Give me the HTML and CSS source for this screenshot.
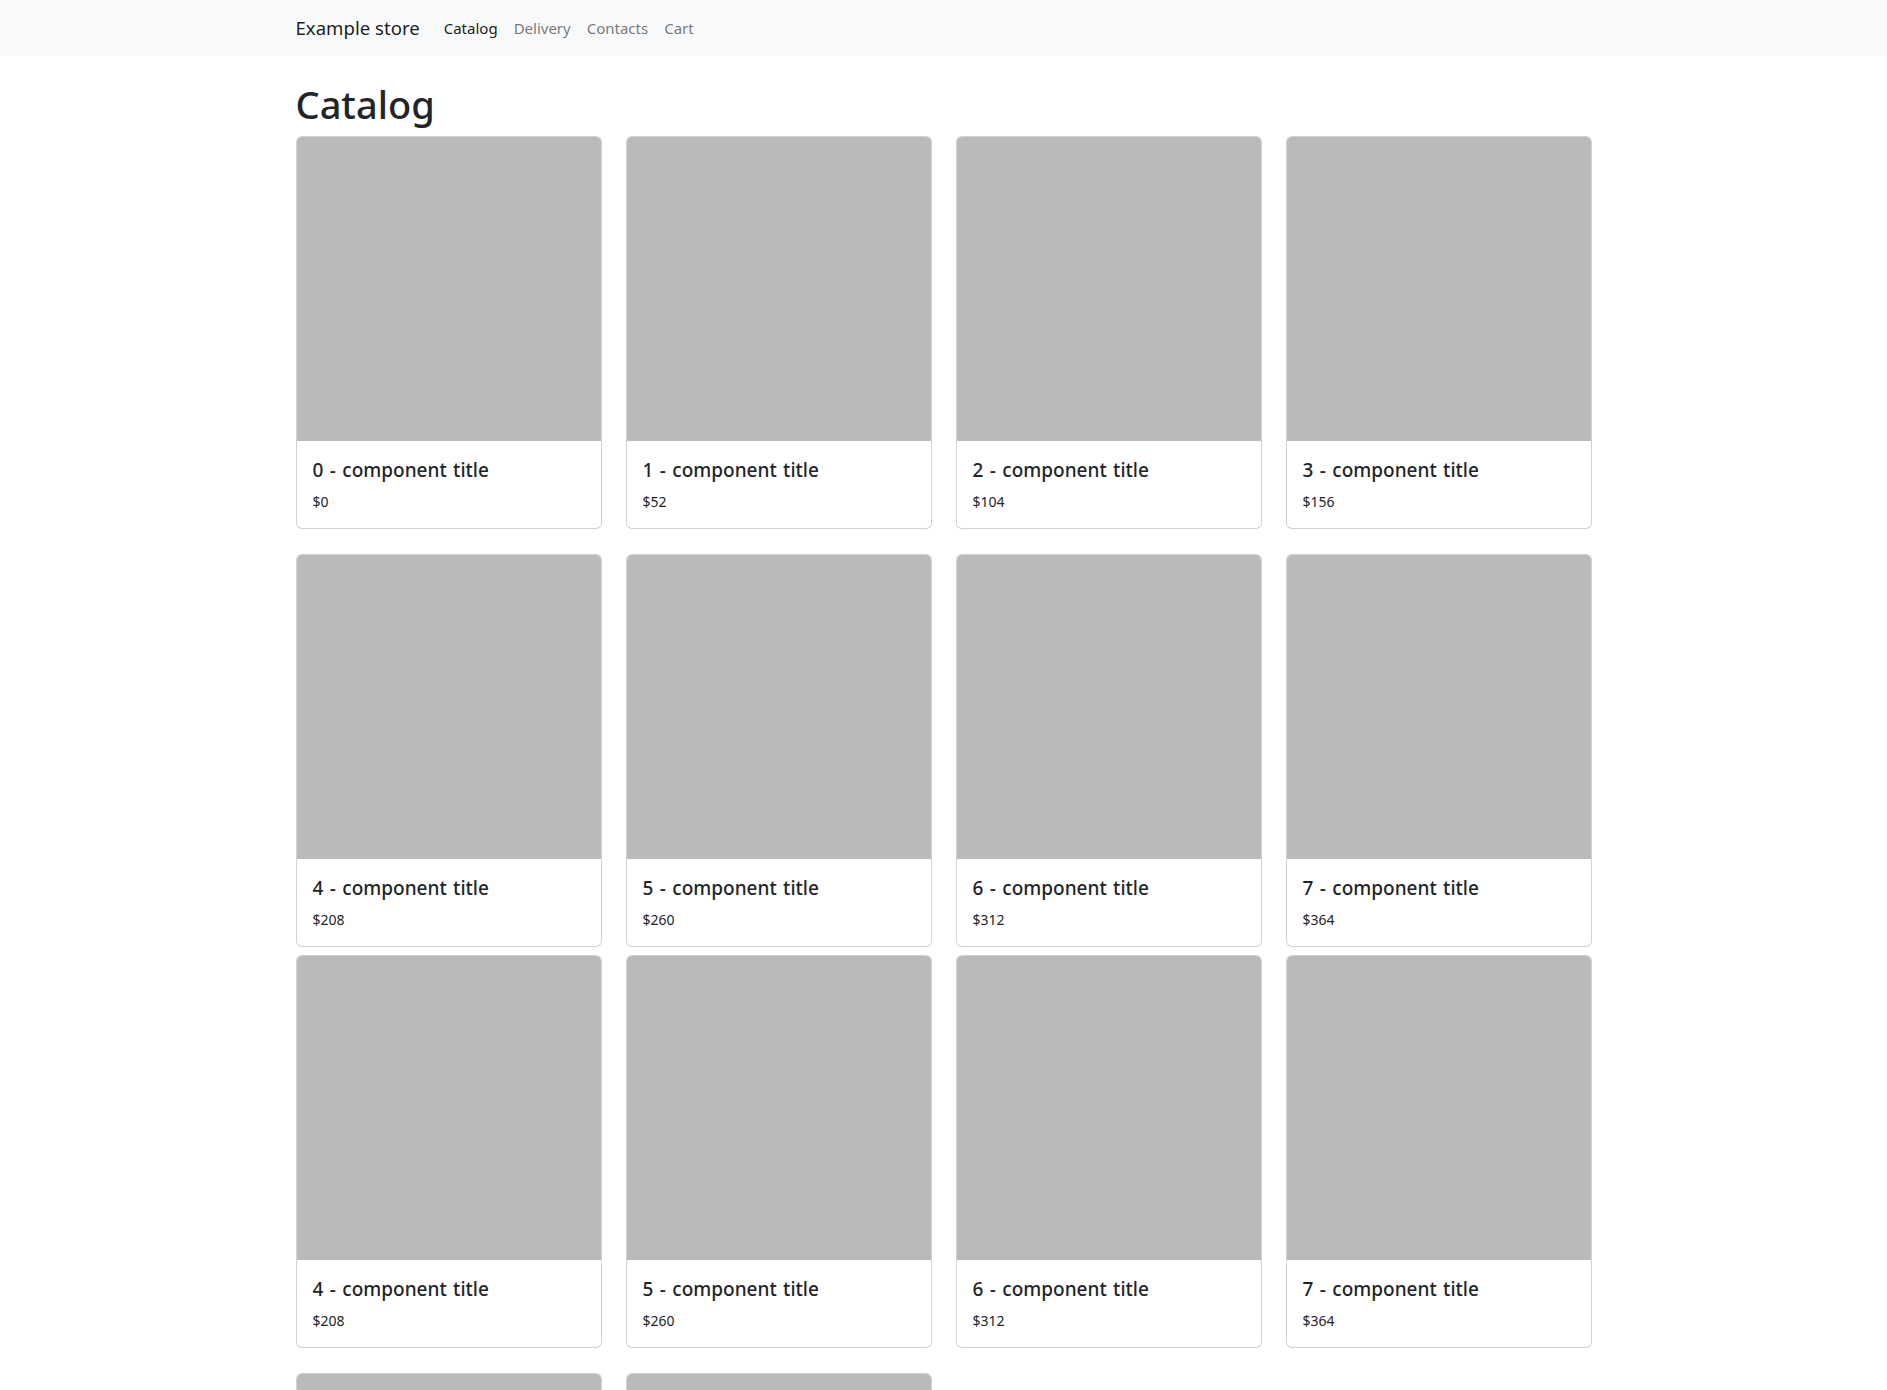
FILE: index.html
```html
<!DOCTYPE html>
<html lang="en">
<head>
<meta charset="utf-8">
<title>Example store</title>
<link rel="stylesheet" href="styles.css">
</head>
<body>
<nav class="navbar">
  <div class="container nav-inner">
    <a class="brand" href="#">Example store</a>
    <ul class="nav-links">
      <li><a class="nav-link active" href="#">Catalog</a></li>
      <li><a class="nav-link" href="#">Delivery</a></li>
      <li><a class="nav-link" href="#">Contacts</a></li>
      <li><a class="nav-link" href="#">Cart</a></li>
    </ul>
  </div>
</nav>
<main class="container main">
  <h1 class="page-title">Catalog</h1>
  <div class="grid row-a">
    <div class="card"><div class="card-img"></div><div class="card-body"><h5 class="card-title">0 - component title</h5><div class="card-price">$0</div></div></div>
    <div class="card"><div class="card-img"></div><div class="card-body"><h5 class="card-title">1 - component title</h5><div class="card-price">$52</div></div></div>
    <div class="card"><div class="card-img"></div><div class="card-body"><h5 class="card-title">2 - component title</h5><div class="card-price">$104</div></div></div>
    <div class="card"><div class="card-img"></div><div class="card-body"><h5 class="card-title">3 - component title</h5><div class="card-price">$156</div></div></div>
  </div>
  <div class="grid row-b">
    <div class="card"><div class="card-img"></div><div class="card-body"><h5 class="card-title">4 - component title</h5><div class="card-price">$208</div></div></div>
    <div class="card"><div class="card-img"></div><div class="card-body"><h5 class="card-title">5 - component title</h5><div class="card-price">$260</div></div></div>
    <div class="card"><div class="card-img"></div><div class="card-body"><h5 class="card-title">6 - component title</h5><div class="card-price">$312</div></div></div>
    <div class="card"><div class="card-img"></div><div class="card-body"><h5 class="card-title">7 - component title</h5><div class="card-price">$364</div></div></div>
  </div>
  <div class="grid row-a">
    <div class="card"><div class="card-img"></div><div class="card-body"><h5 class="card-title">4 - component title</h5><div class="card-price">$208</div></div></div>
    <div class="card"><div class="card-img"></div><div class="card-body"><h5 class="card-title">5 - component title</h5><div class="card-price">$260</div></div></div>
    <div class="card"><div class="card-img"></div><div class="card-body"><h5 class="card-title">6 - component title</h5><div class="card-price">$312</div></div></div>
    <div class="card"><div class="card-img"></div><div class="card-body"><h5 class="card-title">7 - component title</h5><div class="card-price">$364</div></div></div>
  </div>
  <div class="grid row-a">
    <div class="card"><div class="card-img"></div><div class="card-body"><h5 class="card-title">8 - component title</h5><div class="card-price">$416</div></div></div>
    <div class="card"><div class="card-img"></div><div class="card-body"><h5 class="card-title">9 - component title</h5><div class="card-price">$468</div></div></div>
  </div>
</main>
</body>
</html>
```
FILE: styles.css
```css
* { box-sizing: border-box; }
html, body { margin: 0; padding: 0; }
body {
  font-family: "Noto Sans", "Open Sans", sans-serif;
  font-size: 16px;
  line-height: 1.5;
  color: #212529;
  background: #fff;
}
.container {
  width: 1296px;
  margin: 0 auto;
}
.navbar {
  background: #f8f9fa;
  height: 56px;
}
.nav-inner {
  display: flex;
  align-items: center;
  height: 56px;
}
.brand {
  font-size: 18.6px;
  color: rgba(0,0,0,0.9);
  text-decoration: none;
  margin-right: 16px;
  line-height: 30px;
}
.nav-links {
  display: flex;
  list-style: none;
  margin: 0;
  padding: 0;
}
.nav-link {
  display: block;
  padding: 8px 8px;
  font-size: 15px;
  color: rgba(0,0,0,0.55);
  text-decoration: none;
}
.nav-link.active { color: rgba(0,0,0,0.9); }
.main { padding-top: 24px; }
.page-title {
  font-size: 38px;
  font-weight: 500;
  line-height: 48px;
  margin: 0 0 8px;
  color: #212529;
}
.grid {
  display: grid;
  grid-template-columns: repeat(4, 306px);
  column-gap: 24px;
}
.row-a { margin-bottom: 25px; }
.row-b { margin-bottom: 8px; }
.card {
  border: 1px solid rgba(0,0,0,0.175);
  border-radius: 6px;
  overflow: hidden;
  background: #fff;
}
.card-img {
  height: 304px;
  background: #bababa;
}
.card-body {
  padding: 17px 16px 15px;
}
.card-title {
  font-size: 19px;
  font-weight: 500;
  line-height: 24px;
  word-spacing: 1.5px;
  margin: 0 0 8px;
}
.card-price {
  font-size: 14px;
  line-height: 23px;
}
```
